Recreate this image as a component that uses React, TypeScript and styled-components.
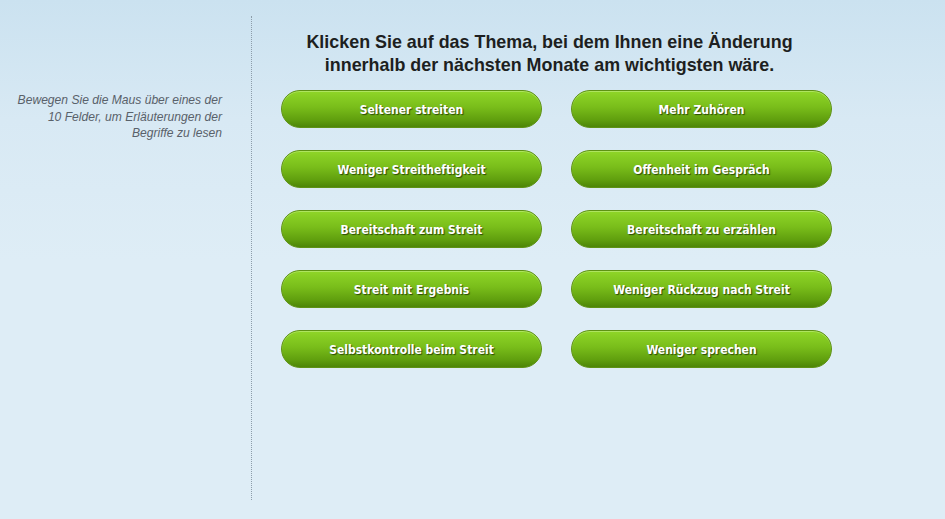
import React from "react";
import styled, { createGlobalStyle } from "styled-components";

const Global = createGlobalStyle`
  html, body { margin: 0; padding: 0; }
  body {
    width: 945px;
    height: 519px;
    overflow: hidden;
    background: linear-gradient(180deg, #cbe2f0 0px, #d8e9f4 120px, #deedf6 260px, #deedf6 100%);
    font-family: "Liberation Sans", Arial, sans-serif;
  }
`;

const Page = styled.div`
  display: flex;
  align-items: flex-start;
  padding-top: 16px;
  height: 503px;
  box-sizing: border-box;
`;

const Sidebar = styled.aside`
  width: 252px;
  height: 484px;
  box-sizing: border-box;
  border-right: 1px dotted #8d9daa;
  padding: 76px 29px 0 0;
  text-align: right;
  font-style: italic;
  font-size: 12.1px;
  line-height: 16.5px;
  color: #59616a;
`;

const Main = styled.main`
  flex: 1;
  display: flex;
  flex-direction: column;
  padding-left: 29px;
`;

const Title = styled.h1`
  width: 537px;
  margin: 15px 0 13px;
  text-align: center;
  font-size: 17.9px;
  line-height: 23px;
  font-weight: bold;
  color: #1d1f21;
`;

const Grid = styled.div`
  display: grid;
  grid-template-columns: 261px 261px;
  column-gap: 29px;
  row-gap: 22px;
`;

const Pill = styled.button`
  height: 38px;
  border-radius: 19px;
  border: 1px solid #5e9214;
  background: linear-gradient(180deg, #8fd628 0%, #79bd1a 45%, #609f0e 80%, #4d8607 100%);
  box-shadow: inset 0 1px 0 rgba(200, 240, 140, 0.55);
  color: #ffffff;
  font-family: "DejaVu Sans Condensed", "DejaVu Sans", Tahoma, sans-serif;
  font-stretch: condensed;
  font-weight: bold;
  font-size: 12px;
  text-shadow: 1px 1px 1px rgba(20, 40, 0, 0.75);
  cursor: pointer;
  padding: 2px 0 0;
`;

const items = [
  "Seltener streiten",
  "Mehr Zuhören",
  "Weniger Streitheftigkeit",
  "Offenheit im Gespräch",
  "Bereitschaft zum Streit",
  "Bereitschaft zu erzählen",
  "Streit mit Ergebnis",
  "Weniger Rückzug nach Streit",
  "Selbstkontrolle beim Streit",
  "Weniger sprechen",
];

export default function App() {
  return (
    <>
      <Global />
      <Page>
        <Sidebar>
          Bewegen Sie die Maus über eines der
          <br />
          10 Felder, um Erläuterungen der
          <br />
          Begriffe zu lesen
        </Sidebar>
        <Main>
          <Title>
            Klicken Sie auf das Thema, bei dem Ihnen eine Änderung
            <br />
            innerhalb der nächsten Monate am wichtigsten wäre.
          </Title>
          <Grid>
            {items.map((t) => (
              <Pill key={t}>{t}</Pill>
            ))}
          </Grid>
        </Main>
      </Page>
    </>
  );
}
